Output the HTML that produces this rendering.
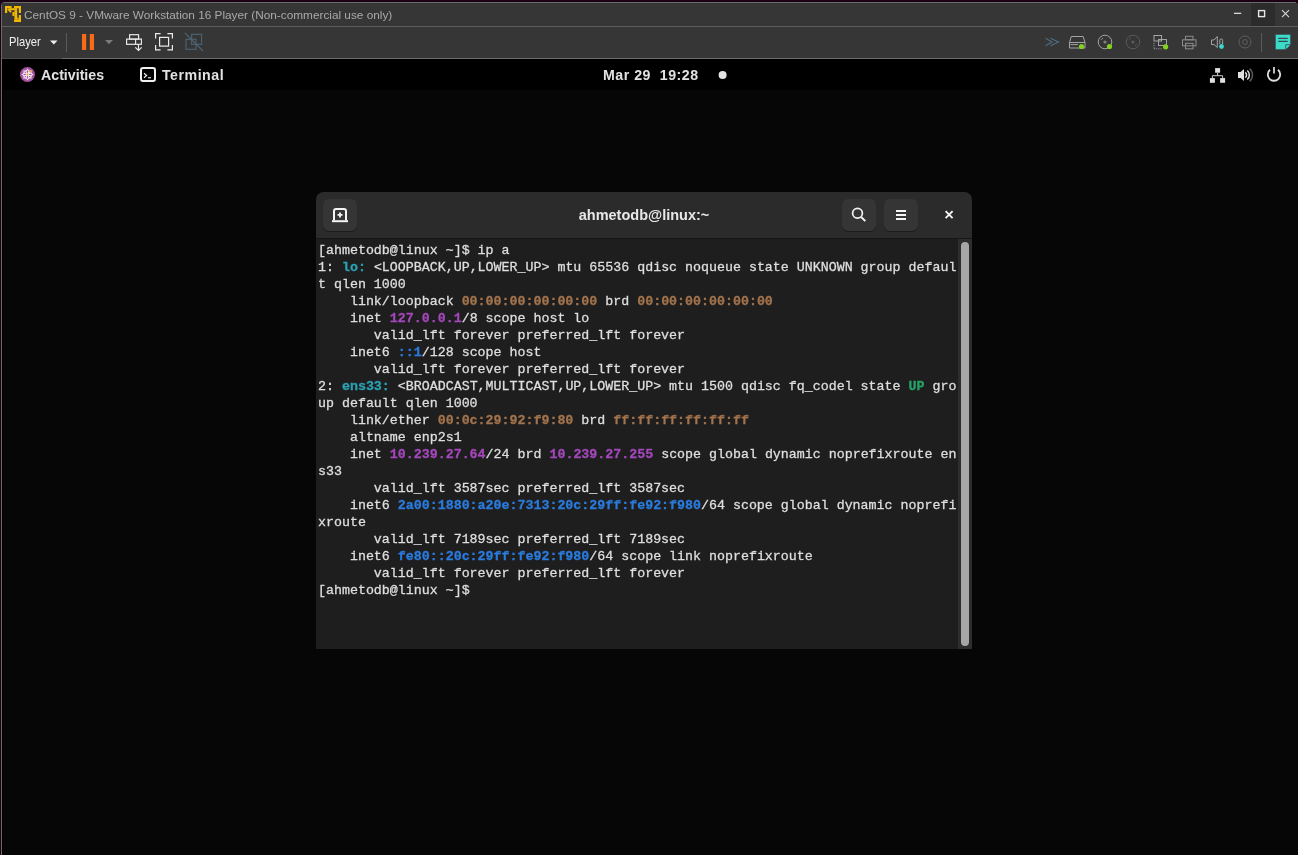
<!DOCTYPE html>
<html><head><meta charset="utf-8">
<style>
*{margin:0;padding:0;box-sizing:border-box}
html,body{width:1298px;height:855px;overflow:hidden;background:#1c0014;position:relative;font-family:"Liberation Sans",sans-serif}
.a{position:absolute}
#vmw{left:1px;top:2px;width:1300px;height:860px;background:#6a6a6a;border-top-left-radius:4px}
#title{left:2px;top:3px;width:1296px;height:23px;background:#363636}
#sep1{left:2px;top:26px;width:1296px;height:1px;background:#5e5e5e}
#tb{left:2px;top:27px;width:1296px;height:31px;background:#363636}
#tbline{left:62px;top:58px;width:1236px;height:1px;background:#6e6e6e}
#tbline2{left:2px;top:58px;width:60px;height:1px;background:#4a4a4a}
#screen{left:3px;top:59px;width:1295px;height:796px;background:#060606;box-shadow:-1px 0 0 #000}
#topbar{left:2px;top:59px;width:1296px;height:31px;background:#000}
.ttl{font-size:11.8px;color:#a9a9a9;white-space:nowrap}
.tbt{font-size:14.2px;font-weight:bold;color:#e2e2e2;white-space:nowrap}
#term{left:316px;top:192px;width:656px;height:457px;background:#1e1e1e;border-radius:8px 8px 0 0;overflow:hidden}
#thead{left:0;top:0;width:656px;height:46px;background:#2b2b2b}
#tline{left:0;top:46px;width:656px;height:1px;background:#161616}
.btn{background:#353535;border-radius:6px;width:34px;height:32px;top:7px;box-shadow:0 1px 0 #1c1c1c}
#ttitle{left:0;top:15px;width:656px;text-align:center;font-size:14.5px;font-weight:bold;color:#e8e8e8}
#sb{left:642px;top:47px;width:14px;height:410px;background:#2d2d2d}
#thumb{left:3px;top:3px;width:8px;height:404px;background:#a6a6a6;border-radius:4px}
pre{position:absolute;left:1.5px;top:50px;font-family:"Liberation Mono",monospace;font-size:13.31px;line-height:17px;color:#dedede;-webkit-text-stroke:0.3px currentColor}
.c{color:#2aa1b3;font-weight:bold}
.y{color:#a2734c;font-weight:bold}
.m{color:#a347ba;font-weight:bold}
.b{color:#2a7bde;font-weight:bold}
.g{color:#26a269;font-weight:bold}
svg{position:absolute;left:0;top:0}
.a,pre{will-change:transform}
</style></head><body>
<div id="vmw" class="a"></div>
<div id="title" class="a"></div>
<div id="sep1" class="a"></div>
<div id="tb" class="a"></div>
<div id="tbline2" class="a"></div>
<div id="tbline" class="a"></div>
<div id="screen" class="a"></div>
<div id="topbar" class="a"></div>
<div class="a" style="left:1251px;top:3px;width:24px;height:23px;background:#2c2c2c"></div>

<div class="a ttl" style="left:24px;top:8px">CentOS 9 - VMware Workstation 16 Player (Non-commercial use only)</div>
<div class="a" style="left:9px;top:35px;font-size:11.2px;color:#f0f0f0;transform:scaleY(1.12);transform-origin:0 0">Player</div>

<div class="a tbt" style="left:41px;top:67px">Activities</div>
<div class="a tbt" style="left:162px;top:67px;letter-spacing:0.5px">Terminal</div>
<div class="a tbt" style="left:603px;top:67px;letter-spacing:0.5px">Mar 29&nbsp; 19:28</div>

<div id="term" class="a">
  <div id="thead" class="a"></div>
  <div id="tline" class="a"></div>
  <div class="a btn" style="left:7px"></div>
  <div class="a btn" style="left:526px"></div>
  <div class="a btn" style="left:568px"></div>
  <div id="ttitle" class="a">ahmetodb@linux:~</div>
  <div id="sb" class="a"><div id="thumb" class="a"></div></div>
<pre>[ahmetodb@linux ~]$ ip a
1: <span class="c">lo: </span>&lt;LOOPBACK,UP,LOWER_UP&gt; mtu 65536 qdisc noqueue state UNKNOWN group defaul
t qlen 1000
    link/loopback <span class="y">00:00:00:00:00:00</span> brd <span class="y">00:00:00:00:00:00</span>
    inet <span class="m">127.0.0.1</span>/8 scope host lo
       valid_lft forever preferred_lft forever
    inet6 <span class="b">::1</span>/128 scope host
       valid_lft forever preferred_lft forever
2: <span class="c">ens33: </span>&lt;BROADCAST,MULTICAST,UP,LOWER_UP&gt; mtu 1500 qdisc fq_codel state <span class="g">UP</span> gro
up default qlen 1000
    link/ether <span class="y">00:0c:29:92:f9:80</span> brd <span class="y">ff:ff:ff:ff:ff:ff</span>
    altname enp2s1
    inet <span class="m">10.239.27.64</span>/24 brd <span class="m">10.239.27.255</span> scope global dynamic noprefixroute en
s33
       valid_lft 3587sec preferred_lft 3587sec
    inet6 <span class="b">2a00:1880:a20e:7313:20c:29ff:fe92:f980</span>/64 scope global dynamic noprefi
xroute
       valid_lft 7189sec preferred_lft 7189sec
    inet6 <span class="b">fe80::20c:29ff:fe92:f980</span>/64 scope link noprefixroute
       valid_lft forever preferred_lft forever
[ahmetodb@linux ~]$ </pre>
</div>

<svg width="1298" height="855" viewBox="0 0 1298 855">
<!-- VMware logo -->
<g fill="#f2b800" transform="translate(5,6)">
  <path d="M0 0H6.6V2.2H2.2V7H0Z"/>
  <path d="M9 0H16V7H13.8V2.2H9Z"/>
  <path d="M13.8 9H16V16H9V13.8H13.8Z"/>
  <path d="M4.1 2.2H12.2V4.2H4.1Z"/>
  <path d="M9.4 4.2H12.2V13.8H9.4Z"/>
  <path d="M7.4 6H9.4V10H7.4Z"/>
  <path d="M2.2 3.6L3.6 2.2L6.8 5.4L5.4 6.8Z"/>
  <path d="M12.2 11L13.8 12.6V13.8H12.2Z"/>
</g>
<!-- window buttons -->
<rect x="1234" y="12.7" width="7.2" height="1.3" fill="#d8d8d8"/><rect x="1296" y="0" width="2" height="3" fill="#1c0014"/>
<rect x="1258.6" y="10.6" width="6" height="6" fill="none" stroke="#e6e6e6" stroke-width="1.4"/>
<path d="M1282 10.2L1289 17.2M1289 10.2L1282 17.2" stroke="#d8d8d8" stroke-width="1.1"/>
<!-- toolbar left -->
<path d="M50 40.5H57.5L53.75 44.5Z" fill="#f0f0f0"/>
<rect x="66" y="33" width="1" height="19" fill="#5a5a5a"/>
<rect x="82" y="34" width="4.2" height="16" fill="#fb6a16"/>
<rect x="89.8" y="34" width="4.2" height="16" fill="#fb6a16"/>
<path d="M105 40H113L109 44.3Z" fill="#7a7a7a"/>
<g fill="none" stroke="#ececec" stroke-width="1.15">
  <rect x="129.6" y="34.7" width="9" height="4.4"/>
  <rect x="126.6" y="39.1" width="14.8" height="5.2"/>
  <path d="M135.6 39.1V44.3M138.5 44.3V50M135.3 47.3L138.5 50.5L141.7 47.3"/>
</g>
<g fill="none" stroke="#ececec" stroke-width="1.2">
  <path d="M155.6 38.5V33.6H160.6M167.4 33.6H172.4V38.5M172.4 45V49.9H167.4M160.6 49.9H155.6V45"/>
  <rect x="159.6" y="37.4" width="9" height="8.7"/>
</g>
<g fill="none" stroke="#4c6374" stroke-width="1.1">
  <rect x="186" y="39.3" width="10" height="10"/>
  <rect x="191.6" y="34.3" width="10" height="10"/>
  <path d="M185 33L203 51"/>
</g>
<!-- toolbar right -->
<g fill="none" stroke="#4f6f85" stroke-width="1.1">
  <path d="M1045.5 38.3L1052 42L1045.5 45.7M1050.5 38.3L1058.5 42L1050.5 45.7"/>
</g>
<g fill="none" stroke="#a4a4a4" stroke-width="1">
  <path d="M1069.5 42.5L1071.2 36.5H1083.2L1085 42.5V48H1069.5Z"/>
  <path d="M1069.5 42.5H1085M1070.5 44.6H1078"/>
  <circle cx="1105" cy="42" r="6.8"/>
</g>
<circle cx="1105" cy="42" r="1.6" fill="#808080"/><path d="M1101.2 39.8A4 4 0 0 1 1103 38.2" fill="none" stroke="#a4a4a4" stroke-width="0.9"/>
<circle cx="1081.5" cy="46.5" r="2.6" fill="#82d21e"/>
<circle cx="1109.5" cy="46.5" r="2.6" fill="#82d21e"/>
<g fill="none" stroke="#5c5c5c" stroke-width="1">
  <circle cx="1133" cy="42" r="6.8"/>
</g>
<circle cx="1133" cy="42" r="1.6" fill="#5a5a5a"/><path d="M1129.2 39.8A4 4 0 0 1 1131 38.2M1136.8 44.2A4 4 0 0 1 1135 45.8" fill="none" stroke="#5e5e5e" stroke-width="0.9"/>
<g fill="none" stroke="#a4a4a4" stroke-width="1">
  <rect x="1154" y="35.5" width="7.5" height="5.5"/>
  <rect x="1158.5" y="39.5" width="8" height="6"/>
  <path d="M1154 43V49M1154 48.8H1162" stroke-dasharray="1 1.2"/>
</g>
<circle cx="1165.6" cy="46.8" r="2.6" fill="#82d21e"/>
<g fill="none" stroke="#8c8c8c" stroke-width="1">
  <rect x="1185.5" y="36.3" width="7.5" height="3.5"/>
  <rect x="1182.5" y="39.8" width="13.5" height="6"/>
  <rect x="1185.5" y="43.3" width="7.5" height="5.5"/>
</g>
<g fill="none" stroke="#a4a4a4" stroke-width="1">
  <path d="M1211.5 40H1214L1217.3 36.5V47.5L1214 44.5H1211.5Z"/>
  <path d="M1219.8 44V40.3A1.4 1.4 0 0 1 1222.6 40.3V44"/>
</g>
<circle cx="1221.5" cy="46.5" r="2.4" fill="#3cd6cc"/>
<g fill="none" stroke="#5e5e5e" stroke-width="1">
  <circle cx="1245" cy="42" r="6"/>
  <circle cx="1245" cy="42" r="2.4"/>
</g>
<rect x="1261" y="33" width="1" height="19" fill="#5a5a5a"/>
<path d="M1275.5 34.5H1290.5V44.8L1285.8 49.5H1275.5Z" fill="#3adcc8" stroke="#3d5560" stroke-width="0.7"/>
<path d="M1278.3 38.4H1287.7M1278.3 41.4H1287.7" stroke="#3a4650" stroke-width="1.1"/>
<path d="M1285.8 49.5V44.8H1290.5" fill="none" stroke="#3d4d58" stroke-width="1"/>
<path d="M1286.5 45.5H1289.6L1286.5 48.6Z" fill="#3adcc8"/>
<!-- GNOME topbar -->
<circle cx="27.45" cy="74.5" r="7.5" fill="#a4519f"/>
<g fill="#f4eef4">
  <path d="M27.5 68.5L30 72L33.5 74.5L30 77L27.5 80.5L25 77L21.5 74.5L25 72Z"/>
  <rect x="23.3" y="70.3" width="8.4" height="8.4" opacity="0.75"/>
</g>
<g fill="#a4519f">
  <ellipse cx="27.5" cy="71.6" rx="0.7" ry="1.3"/>
  <ellipse cx="27.5" cy="77.4" rx="0.7" ry="1.3"/>
  <ellipse cx="24.6" cy="74.5" rx="1.3" ry="0.7"/>
  <ellipse cx="30.4" cy="74.5" rx="1.3" ry="0.7"/>
  <circle cx="25.4" cy="72.4" r="0.6"/><circle cx="29.6" cy="76.6" r="0.6"/><circle cx="25.4" cy="76.6" r="0.6"/>
</g>
<circle cx="27.5" cy="74.5" r="1.1" fill="#f0a020"/>
<circle cx="30.3" cy="71.6" r="1.1" fill="#f0a020"/>
<rect x="141" y="68" width="14" height="13" rx="2" fill="none" stroke="#f0f0f0" stroke-width="2"/>
<path d="M144 73.2L146.6 75.5L144 77.8" fill="none" stroke="#f0f0f0" stroke-width="1.2"/>
<rect x="148" y="77.2" width="3" height="1.1" fill="#f0f0f0"/>
<circle cx="722.6" cy="75" r="4" fill="#e4e4e4"/>
<g fill="#e0e0e0">
  <rect x="1215.1" y="68.1" width="5" height="4.6"/>
  <rect x="1209.9" y="78.1" width="5" height="4.7"/>
  <rect x="1220.1" y="78.1" width="5" height="4.7"/>
</g>
<path d="M1217.6 72.7V75.7M1212.4 78.1V75.7H1222.6V78.1" fill="none" stroke="#e0e0e0" stroke-width="0.9"/>
<path d="M1238 72H1240.6L1244 69V81L1240.6 78H1238Z" fill="#e0e0e0"/>
<g fill="none" stroke-width="1.5">
  <path d="M1245.3 72.3A3.5 3.5 0 0 1 1245.3 77.7" stroke="#e0e0e0"/>
  <path d="M1247.3 70.5A6 6 0 0 1 1247.3 79.5" stroke="#e0e0e0"/>
  <path d="M1249.6 68.6A8.5 8.5 0 0 1 1249.6 81.4" stroke="#555"/>
</g>
<path d="M1270 69.8A6.2 6.2 0 1 0 1278 69.8" fill="none" stroke="#e0e0e0" stroke-width="1.8"/>
<path d="M1274 67V73.4" stroke="#e0e0e0" stroke-width="1.7"/>
<!-- terminal header icons -->
<g fill="none" stroke="#f4f4f4" stroke-width="2">
  <path d="M334 220.5V211A2 2 0 0 1 336 209H344A2 2 0 0 1 346 211V220.5"/>
  <path d="M332 221.2H348"/>
  <path d="M337.5 214.9H342.5M340 212.4V217.4" stroke-width="1.8"/>
  <circle cx="857.5" cy="213.3" r="4.9" stroke-width="1.7"/>
  <path d="M861.2 217L865.3 221.1" stroke-width="1.9"/>
  <path d="M896 211H906M896 215H906M896 219H906" stroke-width="1.8"/>
  <path d="M945.6 211.2L952.6 218.2M952.6 211.2L945.6 218.2" stroke-width="1.9"/>
</g>
</svg>
</body></html>
